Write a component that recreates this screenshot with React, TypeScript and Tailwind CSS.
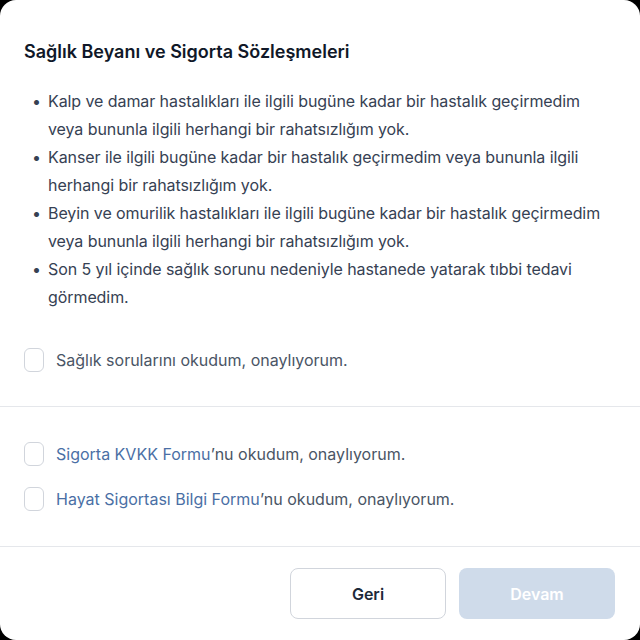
import { useState } from "react";

const items = [
  "Kalp ve damar hastalıkları ile ilgili bugüne kadar bir hastalık geçirmedim veya bununla ilgili herhangi bir rahatsızlığım yok.",
  "Kanser ile ilgili bugüne kadar bir hastalık geçirmedim veya bununla ilgili herhangi bir rahatsızlığım yok.",
  "Beyin ve omurilik hastalıkları ile ilgili bugüne kadar bir hastalık geçirmedim veya bununla ilgili herhangi bir rahatsızlığım yok.",
  "Son 5 yıl içinde sağlık sorunu nedeniyle hastanede yatarak tıbbi tedavi görmedim.",
];

const Check = ({ checked, onChange }: { checked: boolean; onChange: () => void }) => (
  <button
    onClick={onChange}
    className={`w-[20px] h-[24px] shrink-0 rounded-md border ${
      checked ? "bg-[#4a6fa5] border-[#4a6fa5]" : "bg-white border-gray-300"
    }`}
  />
);

const App = () => {
  const [checks, setChecks] = useState([false, false, false]);
  const toggle = (i: number) => setChecks(checks.map((c, j) => (j === i ? !c : c)));
  const allChecked = checks.every(Boolean);

  return (
    <div className="w-[640px] h-[640px] bg-black font-['Inter',sans-serif]">
      <div className="h-full bg-white rounded-2xl flex flex-col">
        <div className="px-6 pt-[40px] pb-[34px]">
          <h2 className="text-[18px] leading-6 font-semibold text-gray-900">
            Sağlık Beyanı ve Sigorta Sözleşmeleri
          </h2>
          <ul className="mt-[23px] text-[16px] leading-7 text-gray-700 tracking-[-0.005em]">
            {items.map((t) => (
              <li key={t} className="flex">
                <span className="w-6 shrink-0 pl-[8px]">•</span>
                <span>{t}</span>
              </li>
            ))}
          </ul>
          <label className="mt-[37px] flex items-center gap-3 text-[16px] text-gray-600">
            <Check checked={checks[0]} onChange={() => toggle(0)} />
            Sağlık sorularını okudum, onaylıyorum.
          </label>
        </div>

        <div className="border-t border-gray-200 px-6 pt-[35px] pb-[35px] flex flex-col gap-[21px]">
          <label className="flex items-center gap-3 text-[16px] text-gray-600">
            <Check checked={checks[1]} onChange={() => toggle(1)} />
            <span>
              <span className="text-[#4a6fa5]">Sigorta KVKK Formu</span>’nu okudum, onaylıyorum.
            </span>
          </label>
          <label className="flex items-center gap-3 text-[16px] text-gray-600">
            <Check checked={checks[2]} onChange={() => toggle(2)} />
            <span>
              <span className="text-[#4a6fa5]">Hayat Sigortası Bilgi Formu</span>’nu okudum, onaylıyorum.
            </span>
          </label>
        </div>

        <div className="border-t border-gray-200 flex justify-end gap-[13px] px-[25px] pt-[21px]">
          <button className="w-[156px] h-[51px] rounded-lg border border-gray-300 bg-white text-[16px] font-semibold text-gray-800">
            Geri
          </button>
          <button
            disabled={!allChecked}
            className="w-[156px] h-[51px] rounded-lg bg-[#cfdbea] text-[16px] font-semibold text-white"
          >
            Devam
          </button>
        </div>
      </div>
    </div>
  );
};

export default App;
